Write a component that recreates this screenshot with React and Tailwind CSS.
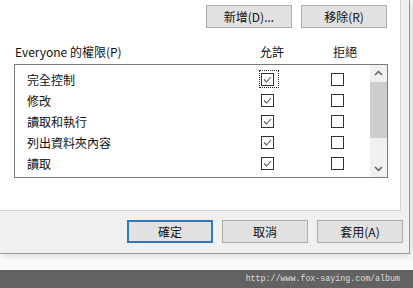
import React from 'react';

const font = { fontFamily: '"Noto Sans CJK TC", "Noto Sans", sans-serif' };

const perms = [
  { name: '完全控制', allow: true, focus: true },
  { name: '修改', allow: true },
  { name: '讀取和執行', allow: true },
  { name: '列出資料夾內容', allow: true },
  { name: '讀取', allow: true },
];

const Box = ({ checked }) => (
  <svg width="13" height="13" viewBox="0 0 13 13" className="block">
    <rect x="0.5" y="0.5" width="12" height="12" fill="#fff" stroke="#333" />
    {checked && (
      <path d="M3 6.5 L5.5 9 L10 4" fill="none" stroke="#555" strokeWidth="1.1" />
    )}
  </svg>
);

const Btn = ({ children, primary }) => (
  <div
    className={`w-[86px] h-[23px] flex items-center justify-center text-[12px] text-[#111] bg-[#e1e1e1] ${
      primary ? 'border-2 border-[#3079bd]' : 'border border-[#adadad]'
    }`}
  >
    {children}
  </div>
);

const Chevron = ({ up }) => (
  <svg width="17" height="17" viewBox="0 0 17 17" className="block">
    <path
      d={up ? 'M5 10 L8.5 6.5 L12 10' : 'M5 7 L8.5 10.5 L12 7'}
      fill="none"
      stroke="#606060"
      strokeWidth="1.5"
    />
  </svg>
);

export default function App() {
  return (
    <div className="w-[413px] h-[288px] overflow-hidden bg-white flex flex-col" style={font}>
      <div className="h-[270px] bg-[#fafafa]">
        {/* dialog */}
        <div className="w-[410px] h-[254px] bg-[#f0f0f0] border-r border-b border-[#9a9a9a] shadow-[2px_2px_6px_rgba(0,0,0,0.12)] flex flex-col">
          {/* tab page */}
          <div className="w-[401px] h-[211px] bg-white border-r border-b border-[#d4d4d4] pt-[5px] pl-[14px] pr-[13px]">
            <div className="flex justify-end gap-[9px]">
              <Btn>新增(D)...</Btn>
              <Btn>移除(R)</Btn>
            </div>

            <div className="mt-[15px] h-[18px] flex items-center text-[12px] text-[#111]">
              <span className="w-[246px] pl-[1px]">Everyone 的權限(P)</span>
              <span className="w-[73px]">允許</span>
              <span>拒絕</span>
            </div>

            <div className="mt-[3px] w-[374px] h-[114px] border border-[#7a7a7a] flex">
              <div className="flex-1 pt-[4px] pl-[12px]">
                {perms.map((p) => (
                  <div key={p.name} className="h-[21px] flex items-center text-[12px] text-[#111]">
                    <span className="w-[234px]">{p.name}</span>
                    <span className="w-[70px] flex">
                      <span className="relative">
                        <Box checked={p.allow} />
                        {p.focus && (
                          <span className="absolute -left-[2px] -right-[5px] -top-[3px] -bottom-[2px] border border-dotted border-[#222]" />
                        )}
                      </span>
                    </span>
                    <Box checked={false} />
                  </div>
                ))}
              </div>
              <div className="w-[17px] bg-[#f0f0f0] flex flex-col">
                <Chevron up />
                <div className="h-[56px] bg-[#cdcdcd]" />
                <div className="flex-1" />
                <Chevron />
              </div>
            </div>
          </div>

          <div className="flex justify-end gap-[9px] pt-[9px] pr-[6px]">
            <Btn primary>確定</Btn>
            <Btn>取消</Btn>
            <Btn>套用(A)</Btn>
          </div>
        </div>
      </div>

      <div className="h-[18px] bg-[#626262] flex items-center justify-end pr-[13px]">
        <span className="text-[8.3px] text-[#dedede]" style={{ fontFamily: '"Liberation Mono", monospace' }}>
          http://www.fox-saying.com/album
        </span>
      </div>
    </div>
  );
}
